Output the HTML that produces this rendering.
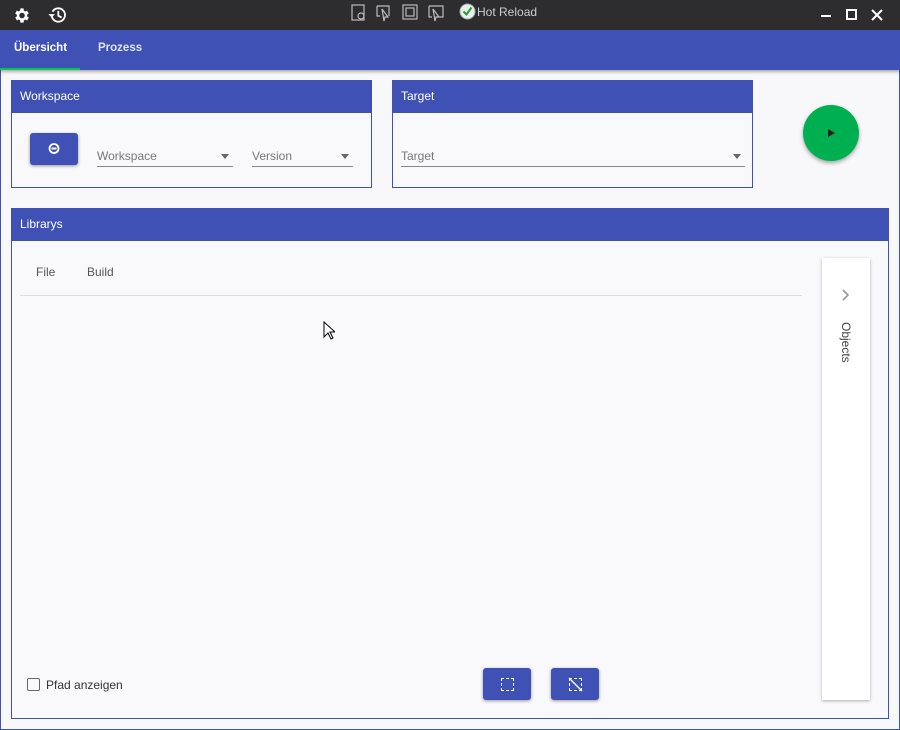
<!DOCTYPE html>
<html><head><style>
*{margin:0;padding:0;box-sizing:border-box}
body{width:900px;height:730px;background:#f8f8fb;font-family:"Liberation Sans",sans-serif;position:relative;overflow:hidden}
.abs{position:absolute}
.tb{left:0;top:0;width:900px;height:30px;background:#2d2d30;color:#ccc}
.tabs{left:0;top:30px;width:900px;height:40px;background:#3f51b5;box-shadow:0 2px 3px rgba(0,0,0,.3)}
.tab{top:12px;font-size:11.5px;font-weight:bold;color:#fff}
.card{border:1px solid #3f51b5;background:#f9f9fb}
.hdr{position:absolute;left:0;top:0;right:0;height:32px;background:#3f51b5;color:#fff;font-size:12px;padding:9px 8px}
.sel{border-bottom:1px solid #888;font-size:12px;color:#777;height:20px;padding-top:2px}
.sel:after{content:"";position:absolute;right:4px;top:7px;border:4px solid transparent;border-top:5px solid #666}
.btn{background:#3f51b5;border-radius:3px;box-shadow:0 1px 3px rgba(0,0,0,.4)}
</style></head><body>
<div class="abs" style="left:0;top:0;width:900px;height:730px;border:1px solid #3f51b5;border-top:none"></div>
<div class="abs tb">
<svg class="abs" style="left:12px;top:6px" width="20" height="19" viewBox="0 0 24 24"><path fill="#fff" d="M19.4 13a7.5 7.5 0 000-2l2.1-1.6-2-3.5-2.5 1a7 7 0 00-1.7-1L15 3h-4l-.4 2.9a7 7 0 00-1.7 1l-2.5-1-2 3.5L6.6 11a7.5 7.5 0 000 2l-2.1 1.6 2 3.5 2.5-1a7 7 0 001.7 1L11 21h4l.4-2.9a7 7 0 001.7-1l2.5 1 2-3.5zM13 15.5a3.5 3.5 0 110-7 3.5 3.5 0 010 7z" transform="translate(-1 0)"/></svg>
<svg class="abs" style="left:47px;top:5px" width="21" height="20" viewBox="0 0 24 24"><path fill="none" stroke="#fff" stroke-width="2.2" d="M5 12a8 8 0 108-8 8 8 0 00-7 4M13 7v6l4 2"/><path fill="#fff" d="M1 11h8l-4 4z"/></svg>
<svg class="abs" style="left:351px;top:3px" width="100" height="20" viewBox="0 0 100 20" fill="none" stroke="#bbb" stroke-width="1.2"><rect x="1" y="2" width="12" height="15"/><circle cx="10" cy="13" r="3"/><path d="M26 3h12v10M26 3v10h3M31 6l6 8-3 0 -1 4z"/><rect x="52" y="2" width="14" height="14"/><rect x="55" y="5" width="8" height="8"/><path d="M78 3h14v11h-4M78 3v11h3M82 6l6 8-3 0-1 4z"/></svg>
<svg class="abs" style="left:459px;top:3px" width="17" height="17" viewBox="0 0 17 17"><circle cx="8.5" cy="8.5" r="7.5" fill="#e8f2e8" stroke="#aaa"/><path d="M4.5 8.5l3 3 5-7" fill="none" stroke="#2a9a3a" stroke-width="2"/></svg>
<div class="abs" style="left:477px;top:5px;font-size:12px;color:#ccc">Hot Reload</div>
<div class="abs" style="left:821px;top:15px;width:10px;height:2px;background:#fff"></div>
<div class="abs" style="left:846px;top:9px;width:11px;height:11px;border:2px solid #fff"></div>
<svg class="abs" style="left:871px;top:9px" width="12" height="12"><path d="M1 1l10 10M11 1L1 11" stroke="#fff" stroke-width="2"/></svg>
</div>
<div class="abs tabs">
<div class="abs tab" style="left:14px">Übersicht</div>
<div class="abs tab" style="left:98px;color:#e0e4f5">Prozess</div>
<div class="abs" style="left:0;top:38px;width:80px;height:2px;background:#00c853"></div>
</div>
<div class="abs card" style="left:11px;top:80px;width:361px;height:108px">
<div class="hdr" style="padding-top:8px">Workspace</div>
<div class="abs btn" style="left:18px;top:52px;width:48px;height:32px"><svg class="abs" style="left:18px;top:10px" width="12" height="11"><circle cx="6" cy="5.5" r="4.5" fill="none" stroke="#fff" stroke-width="1.8"/><rect x="3.5" y="4.5" width="5" height="2" fill="#fff"/></svg></div>
<div class="abs sel" style="left:85px;top:66px;width:136px">Workspace</div>
<div class="abs sel" style="left:240px;top:66px;width:101px">Version</div>
</div>
<div class="abs card" style="left:392px;top:80px;width:361px;height:108px">
<div class="hdr" style="padding-top:8px">Target</div>
<div class="abs sel" style="left:8px;top:66px;width:344px">Target</div>
</div>
<div class="abs" style="left:803px;top:105px;width:56px;height:56px;border-radius:50%;background:#00b050;box-shadow:0 2px 4px rgba(0,0,0,.35)"><div class="abs" style="left:25px;top:24px;border:4px solid transparent;border-left:7px solid #222;border-right:none"></div></div>
<div class="abs card" style="left:11px;top:208px;width:878px;height:511px">
<div class="hdr" style="padding-top:8px">Librarys</div>
<div class="abs" style="left:24px;top:56px;font-size:12px;color:#555">File</div>
<div class="abs" style="left:75px;top:56px;font-size:12px;color:#555">Build</div>
<div class="abs" style="left:8px;top:86px;width:782px;height:1px;background:#ddd"></div>
<div class="abs" style="left:810px;top:49px;width:48px;height:442px;background:#fff;box-shadow:0 1px 3px rgba(0,0,0,.3)">
<svg class="abs" style="left:19px;top:31px" width="10" height="12"><path d="M2 1l5 5-5 5" fill="none" stroke="#999" stroke-width="1.6"/></svg>
<div class="abs" style="left:17px;top:64px;font-size:12px;color:#444;writing-mode:vertical-rl">Objects</div>
</div>
<div class="abs" style="left:15px;top:469px;width:13px;height:13px;border:1.5px solid #666;border-radius:2px"></div>
<div class="abs" style="left:34px;top:469px;font-size:12px;color:#333">Pfad anzeigen</div>
<div class="abs btn" style="left:471px;top:459px;width:48px;height:32px"><div class="abs" style="left:18px;top:10px;width:13px;height:13px;border:1.5px dashed #fff"></div></div>
<div class="abs btn" style="left:539px;top:459px;width:48px;height:32px"><div class="abs" style="left:18px;top:10px;width:13px;height:13px;border:1.5px dashed #fff"></div><svg class="abs" style="left:17px;top:9px" width="15" height="15"><path d="M1 1l13 13" stroke="#fff" stroke-width="1.3"/></svg></div>
</div>
<svg class="abs" style="left:323px;top:321px" width="12" height="19"><path d="M1 1v15l4-4 3 6 2-1-3-6h5z" fill="#fff" stroke="#000"/></svg>
</body></html>
